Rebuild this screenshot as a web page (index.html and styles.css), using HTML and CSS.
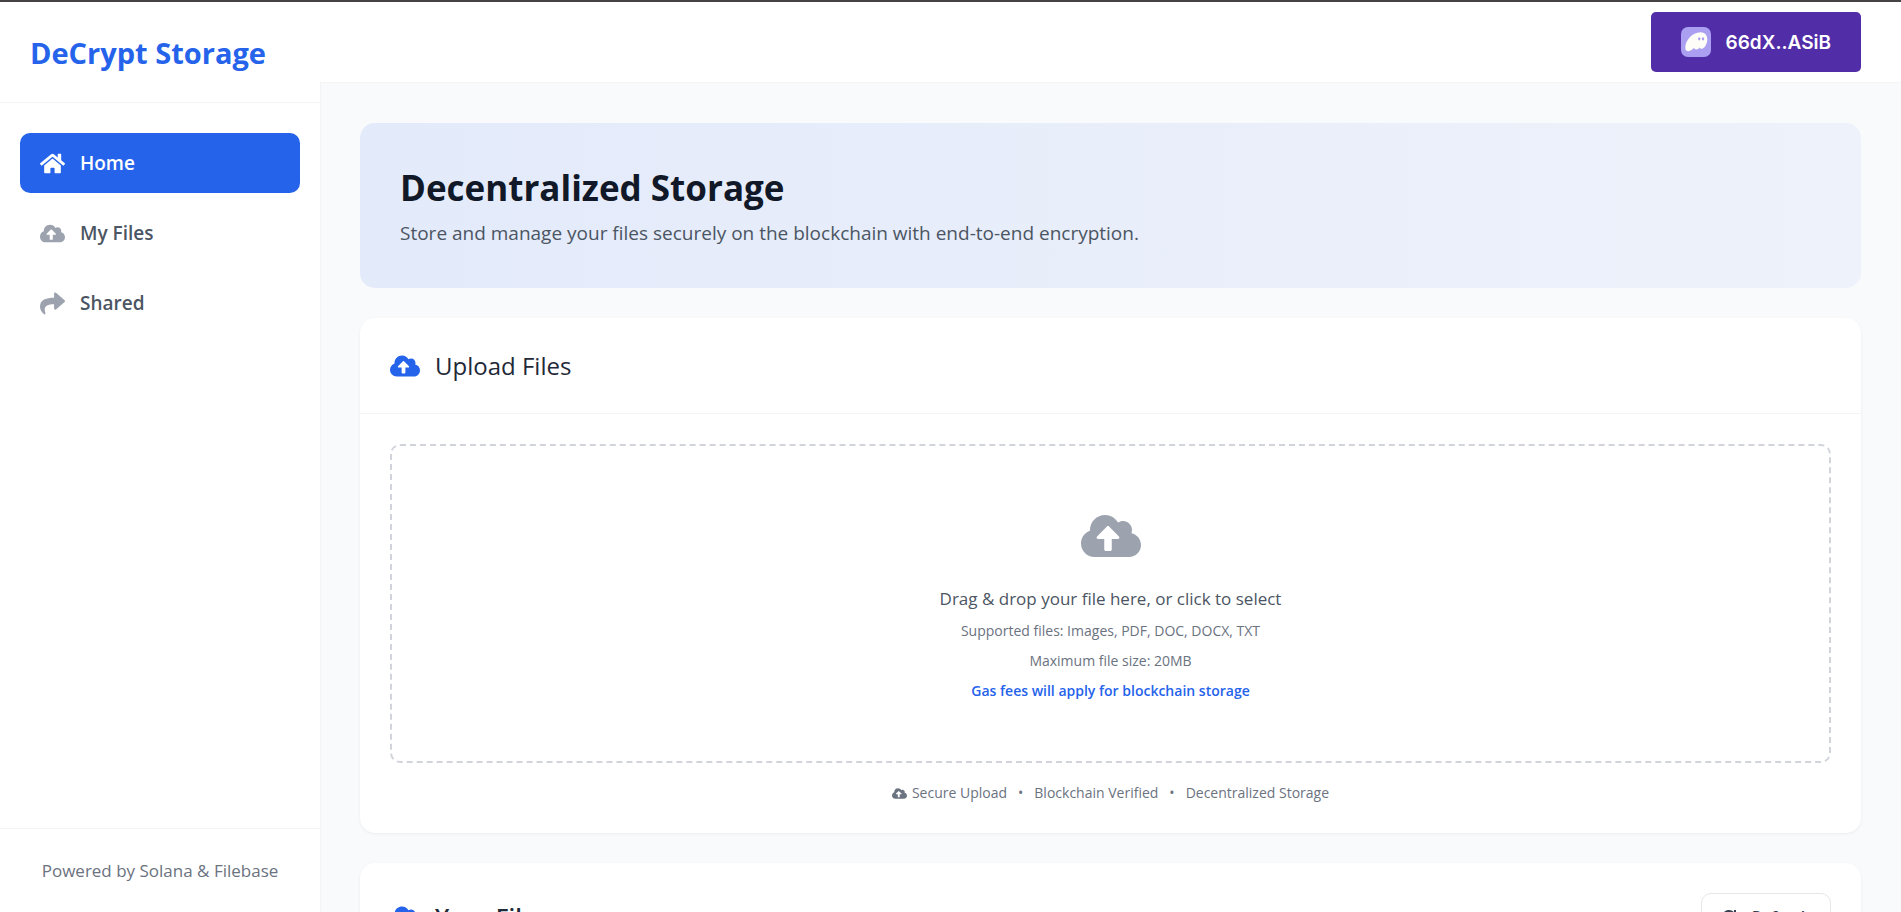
FILE: index.html
```html
<!DOCTYPE html>
<html lang="en">
<head>
<meta charset="utf-8">
<title>DeCrypt Storage</title>
<link rel="stylesheet" href="styles.css">
</head>
<body>
<svg class="sprite" aria-hidden="true">
  <symbol id="cloud" viewBox="0 0 640 512"><path d="M537.6 226.6c4.1-10.7 6.4-22.4 6.4-34.6 0-53-43-96-96-96-19.7 0-38.1 6-53.3 16.2C367 64.2 315.3 32 256 32c-88.4 0-160 71.6-160 160 0 2.7.1 5.4.2 8.1C40.2 219.8 0 273.2 0 336c0 79.5 64.5 144 144 144h368c70.7 0 128-57.3 128-128 0-61.9-44-113.6-102.4-125.4zM393.4 288H328v112c0 8.8-7.2 16-16 16h-48c-8.8 0-16-7.2-16-16V288h-65.4c-14.3 0-21.4-17.2-11.3-27.3l105.4-105.4c6.2-6.2 16.4-6.2 22.6 0l105.4 105.4c10.1 10.1 2.9 27.3-11.3 27.3z"/></symbol>
  <symbol id="home" viewBox="0 0 576 512"><path d="M280.37 148.26L96 300.11V464a16 16 0 0 0 16 16l112.06-.29a16 16 0 0 0 15.92-16V368a16 16 0 0 1 16-16h64a16 16 0 0 1 16 16v95.64a16 16 0 0 0 16 16.05L464 480a16 16 0 0 0 16-16V300L295.67 148.26a12.19 12.19 0 0 0-15.3 0zM571.6 251.47L488 182.56V44.05a12 12 0 0 0-12-12h-56a12 12 0 0 0-12 12v72.61L318.47 43a48 48 0 0 0-61 0L4.34 251.47a12 12 0 0 0-1.6 16.9l25.5 31A12 12 0 0 0 45.15 301l235.22-193.74a12.19 12.19 0 0 1 15.3 0L530.9 301a12 12 0 0 0 16.9-1.6l25.5-31a12 12 0 0 0-1.7-16.93z"/></symbol>
  <symbol id="share" viewBox="0 0 512 512"><path d="M503.691 189.836L327.687 37.851C312.281 24.546 288 35.347 288 56.015v80.053C127.371 137.907 0 170.1 0 322.326c0 61.441 39.581 122.309 83.333 154.132 13.653 9.931 33.111-2.533 28.077-18.631C66.066 312.814 132.917 274.316 288 272.085V360c0 20.7 24.3 31.453 39.687 18.164l176.004-152c11.071-9.562 11.086-26.753 0-36.328z"/></symbol>
</svg>
<div class="app">
  <aside class="sidebar">
    <div class="brand">DeCrypt Storage</div>
    <nav class="nav">
      <a class="nav-link active" href="#home"><svg class="nav-icon"><use href="#home"/></svg>Home</a>
      <a class="nav-link" href="#files"><svg class="nav-icon"><use href="#cloud"/></svg>My Files</a>
      <a class="nav-link" href="#shared"><svg class="nav-icon"><use href="#share"/></svg>Shared</a>
    </nav>
    <footer class="powered">Powered by Solana &amp; Filebase</footer>
  </aside>
  <div class="main">
    <header class="topbar">
      <button class="wallet" type="button">
        <svg class="wallet-icon" viewBox="0 0 30 30"><rect width="30" height="30" rx="7" fill="#ab9ff2"/><path d="M4.300 21C4 14 11 5.300 19.500 5.300C24 5.300 26.400 8.500 26.300 12.500C26.200 17 23.500 21.500 20.800 21.800C19.500 22 19 21.300 18.700 20.600C17.800 21.800 16.600 22.700 15.200 22.600C13.900 22.500 13.200 21.700 13.200 20.600C11.700 22.600 9.500 24.200 7.300 24.200C5.300 24.200 4.400 23 4.300 21Z" fill="#fffdf8"/><ellipse cx="18.200" cy="11.800" rx="1.200" ry="1.600" fill="#ab9ff2"/><ellipse cx="22" cy="11.800" rx="1.200" ry="1.600" fill="#ab9ff2"/></svg>
        66dX..ASiB
      </button>
    </header>
    <main class="content">
      <section class="hero">
        <h1 class="hero-title">Decentralized Storage</h1>
        <p class="hero-text">Store and manage your files securely on the blockchain with end-to-end encryption.</p>
      </section>
      <section class="card">
        <div class="card-head">
          <h2 class="card-title"><svg class="card-icon"><use href="#cloud"/></svg>Upload Files</h2>
        </div>
        <div class="card-body">
          <button class="dropzone" type="button">
            <svg class="drop-icon"><use href="#cloud"/></svg>
            <span class="drop-lead">Drag &amp; drop your file here, or click to select</span>
            <span class="drop-note">Supported files: Images, PDF, DOC, DOCX, TXT</span>
            <span class="drop-note">Maximum file size: 20MB</span>
            <span class="drop-note drop-fee">Gas fees will apply for blockchain storage</span>
          </button>
          <p class="features"><svg class="feature-icon"><use href="#cloud"/></svg><span>Secure Upload</span><span class="dot">•</span><span>Blockchain Verified</span><span class="dot">•</span><span>Decentralized Storage</span></p>
        </div>
      </section>
      <section class="card">
        <div class="card-head">
          <h2 class="card-title strong"><svg class="card-icon"><use href="#cloud"/></svg>Your Files</h2>
          <button class="refresh" type="button"><svg class="refresh-icon" viewBox="0 0 16 16"><path d="M14 8a6 6 0 1 1-2-4.500M14 1v4h-4" fill="none" stroke="currentColor" stroke-width="2"/></svg>Refresh</button>
        </div>
      </section>
    </main>
  </div>
</div>
</body>
</html>
```
FILE: styles.css
```css
* { box-sizing: border-box; }

body {
  margin: 0;
  font-family: "Open Sans", "Noto Sans", sans-serif;
  background: #f9fafb;
  color: #4b5563;
}

h1, h2, p { margin: 0; }
button { font-family: inherit; cursor: pointer; }
svg { fill: currentColor; flex: none; }
.sprite { display: none; }

.app {
  display: flex;
  height: 100vh;
  overflow: hidden;
  border-top: 2px solid #454343;
}

.sidebar {
  display: flex;
  flex-direction: column;
  flex: none;
  width: 320px;
  background: #fff;
  box-shadow: 1px 0 0 #f3f4f6;
}

.brand {
  padding: 31px 30px 29px;
  border-bottom: 1px solid #f3f4f6;
  color: #2563eb;
  font-size: 29px;
  font-weight: 700;
  line-height: 40px;
}

.nav {
  display: flex;
  flex-direction: column;
  flex: 1;
  gap: 10px;
  padding: 30px 20px;
}

.nav-link {
  display: flex;
  align-items: center;
  gap: 15px;
  height: 60px;
  padding: 0 20px;
  border-radius: 10px;
  color: #4b5563;
  font-size: 19px;
  font-weight: 600;
  text-decoration: none;
}

.nav-icon { width: 25px; height: 25px; color: #9ca3af; }
.active { background: #2563eb; color: #fff; }
.active .nav-icon { color: #fff; }

.powered {
  padding: 30px 20px 29px;
  border-top: 1px solid #f3f4f6;
  color: #6b7280;
  font-size: 17px;
  line-height: 24px;
  text-align: center;
}

.main {
  display: flex;
  flex-direction: column;
  flex: 1;
  min-width: 0;
}

.topbar {
  display: flex;
  justify-content: flex-end;
  padding: 10px 40px;
  background: #fff;
  border-bottom: 1px solid #f3f4f6;
}

.wallet {
  display: flex;
  align-items: center;
  gap: 15px;
  height: 60px;
  padding: 0 30px;
  border: 0;
  border-radius: 5px;
  background: #512da8;
  color: #fff;
  font-family: Inter, sans-serif;
  font-size: 19px;
  font-weight: 600;
}

.wallet-icon { width: 30px; height: 30px; }

.content {
  display: flex;
  flex-direction: column;
  gap: 30px;
  padding: 40px;
  overflow: hidden;
}

.content > * { flex: none; }

.hero {
  padding: 40px;
  border-radius: 15px;
  background: linear-gradient(90deg, #e3eafa, #eef2fa);
}

.hero-title {
  color: #111827;
  font-size: 35px;
  font-weight: 700;
  line-height: 50px;
}

.hero-text {
  padding-top: 5px;
  font-size: 19px;
  line-height: 30px;
}

.card {
  border-radius: 15px;
  background: #fff;
  box-shadow: 0 1px 3px rgba(0, 0, 0, 0.06);
}

.card-head {
  display: flex;
  align-items: center;
  justify-content: space-between;
  padding: 30px;
  border-bottom: 1px solid #f3f4f6;
}

.card-title {
  display: flex;
  align-items: center;
  gap: 15px;
  color: #1f2937;
  font-size: 24px;
  font-weight: 500;
  line-height: 35px;
}

.strong { font-weight: 600; }
.card-icon { width: 30px; height: 24px; color: #2563eb; }
.card-body { padding: 30px; }

.dropzone {
  display: flex;
  flex-direction: column;
  align-items: center;
  width: 100%;
  padding: 60px 30px 55px;
  border: 2px dashed #d1d5db;
  border-radius: 10px;
  background: #fff;
  color: #6b7280;
}

.drop-icon {
  width: 60px;
  height: 60px;
  margin-bottom: 20px;
  color: #9ca3af;
}

.drop-lead {
  margin-bottom: 4px;
  color: #4b5563;
  font-size: 17px;
  line-height: 26px;
}

.drop-note { font-size: 14px; line-height: 30px; }
.drop-fee { color: #2563eb; font-weight: 600; }

.features {
  display: flex;
  align-items: center;
  justify-content: center;
  padding-top: 20px;
  color: #6b7280;
  font-size: 14px;
  line-height: 20px;
}

.feature-icon { width: 15px; height: 15px; margin-right: 5px; }
.dot { margin: 0 11px; }

.refresh {
  display: flex;
  align-items: center;
  gap: 15px;
  height: 47px;
  padding: 0 19px;
  border: 1px solid #e5e7eb;
  border-radius: 10px;
  background: #fff;
  color: #374151;
  font-size: 16px;
  font-weight: 600;
}

.refresh-icon { width: 16px; height: 16px; }
```
